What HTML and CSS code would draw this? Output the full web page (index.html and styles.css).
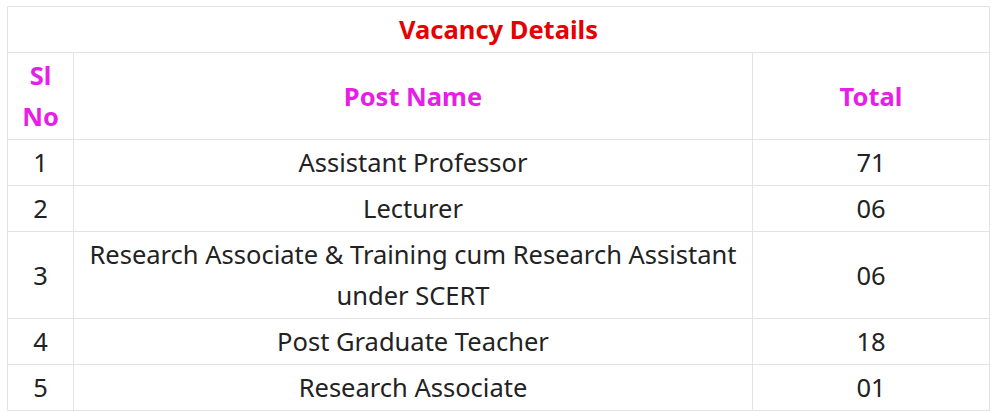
FILE: index.html
```html
<!DOCTYPE html>
<html>
<head>
<meta charset="utf-8">
<link rel="stylesheet" href="styles.css">
</head>
<body>
<table class="vacancy">
  <colgroup>
    <col class="c-sl">
    <col class="c-post">
    <col class="c-total">
  </colgroup>
  <thead>
    <tr><th colspan="3" class="title">Vacancy Details</th></tr>
    <tr class="head">
      <th>Sl No</th>
      <th>Post Name</th>
      <th>Total</th>
    </tr>
  </thead>
  <tbody>
    <tr><td>1</td><td>Assistant Professor</td><td>71</td></tr>
    <tr><td>2</td><td>Lecturer</td><td>06</td></tr>
    <tr><td>3</td><td>Research Associate &amp; Training cum Research Assistant under SCERT</td><td>06</td></tr>
    <tr><td>4</td><td>Post Graduate Teacher</td><td>18</td></tr>
    <tr><td>5</td><td>Research Associate</td><td>01</td></tr>
  </tbody>
</table>
</body>
</html>
```
FILE: styles.css
```css
html, body {
  margin: 0;
  padding: 0;
  background: #ffffff;
}
body {
  padding: 6px 0 0 7px;
  font-family: "Noto Sans", "Open Sans", sans-serif;
}
.vacancy {
  border-collapse: collapse;
  width: 982px;
  table-layout: fixed;
  color: #222222;
  font-size: 25.5px;
}
.c-sl { width: 66px; }
.c-post { width: 679px; }
.c-total { width: 237px; }
.vacancy th, .vacancy td {
  border: 1px solid #e3e3e3;
  text-align: center;
  vertical-align: middle;
  padding: 2px 6px 2px;
  line-height: 41px;
}
.vacancy .title {
  color: #e60000;
  font-weight: bold;
}
.head th {
  color: #e61ee6;
  font-weight: bold;
}
```
